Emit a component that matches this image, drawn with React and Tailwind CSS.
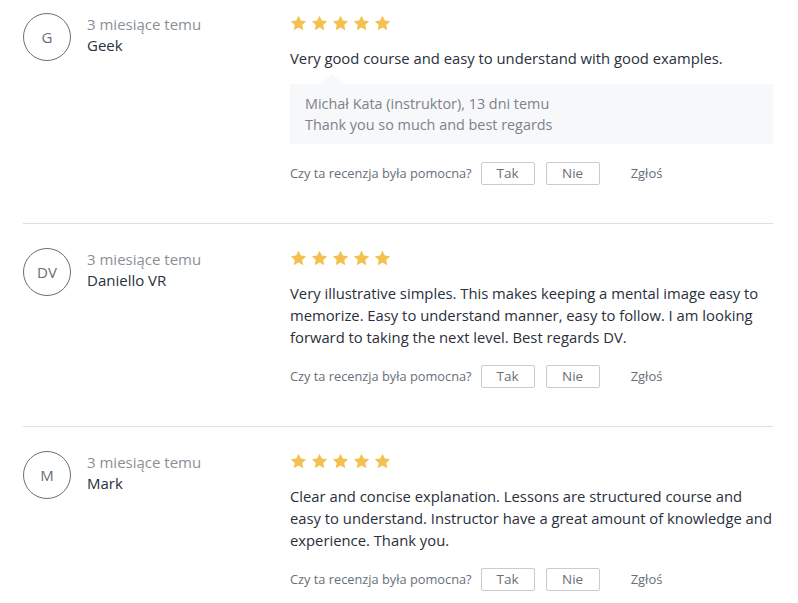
import React from "react";

const reviews = [
  {
    initials: "G",
    name: "Geek",
    text: "Very good course and easy to understand with good examples.",
    reply: {
      author: "Michał Kata (instruktor), 13 dni temu",
      text: "Thank you so much and best regards",
    },
  },
  {
    initials: "DV",
    name: "Daniello VR",
    text: "Very illustrative simples. This makes keeping a mental image easy to memorize. Easy to understand manner, easy to follow. I am looking forward to taking the next level. Best regards DV.",
  },
  {
    initials: "M",
    name: "Mark",
    text: "Clear and concise explanation. Lessons are structured course and easy to understand. Instructor have a great amount of knowledge and experience. Thank you.",
  },
];

function Star() {
  return (
    <svg viewBox="0 0 24 24" className="w-[17px] h-[17px]" fill="#f4c150">
      <path d="M12 1l3.3 6.8 7.5 1-5.5 5.2 1.4 7.4L12 17.8l-6.7 3.6 1.4-7.4L1.2 8.8l7.5-1z" />
    </svg>
  );
}

function Review({ review, first, last }) {
  return (
    <div
      className={`flex ${first ? "pt-[13px]" : "pt-[24px]"} ${
        last ? "" : "pb-[38px] border-b border-[#dedfe0]"
      }`}
    >
      <div className="w-[267px] shrink-0 flex items-start gap-4">
        <div className="w-12 h-12 rounded-full border border-[#686f7a] flex items-center justify-center text-[15px] text-[#686f7a]">
          {review.initials}
        </div>
        <div className="pt-[1px] leading-[21px]">
          <div className="text-[15px] text-[#8a8f96]">3 miesiące temu</div>
          <div className="text-[15px] text-[#29303b]">{review.name}</div>
        </div>
      </div>
      <div className="flex-1">
        <div className="flex gap-[4px] pt-[2px]">
          <Star />
          <Star />
          <Star />
          <Star />
          <Star />
        </div>
        <p className="mt-[15px] text-[14.8px] leading-[22px] text-[#29303b]">
          {review.text}
        </p>
        {review.reply && (
          <div className="relative mt-[15px] bg-[#f7f8fa] px-[15px] py-[9px] text-[14.4px] leading-[21px] text-[#7d828a]">
            <div className="absolute -top-[10px] left-[30px] w-0 h-0 border-l-[12px] border-r-[12px] border-b-[10px] border-l-transparent border-r-transparent border-b-[#f7f8fa]" />
            <div>{review.reply.author}</div>
            <div>{review.reply.text}</div>
          </div>
        )}
        <div
          className={`flex items-center ${
            review.reply ? "mt-[18px]" : "mt-[17px]"
          } text-[12.8px] text-[#686f7a]`}
        >
          <span className="mr-[9px]">Czy ta recenzja była pomocna?</span>
          <button className="w-[54px] h-[23px] border border-[#cacbcc] rounded-[2px] text-[13.5px] text-[#686f7a] bg-white">
            Tak
          </button>
          <button className="ml-[11px] w-[54px] h-[23px] border border-[#cacbcc] rounded-[2px] text-[13.5px] text-[#686f7a] bg-white">
            Nie
          </button>
          <span className="ml-[31px] text-[13px]">Zgłoś</span>
        </div>
      </div>
    </div>
  );
}

export default function App() {
  return (
    <div
      className="w-[798px] h-[603px] overflow-hidden bg-white pl-[23px] pr-[25px]"
      style={{ fontFamily: '"Open Sans", sans-serif' }}
    >
      {reviews.map((r, i) => (
        <Review
          key={r.name}
          review={r}
          first={i === 0}
          last={i === reviews.length - 1}
        />
      ))}
    </div>
  );
}
